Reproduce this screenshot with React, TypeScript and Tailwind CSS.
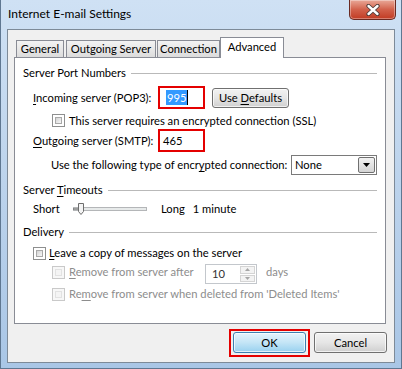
function CloseButton() {
  return (
    <div className="mr-[5px] w-[47px] h-[20px] rounded-b-[5px] border border-t-0 border-[#6a2a22] bg-gradient-to-b from-[#e8a898] via-[#d2614b] to-[#c13a22] flex items-center justify-center shadow-[inset_0_0_0_1px_rgba(255,255,255,0.35)]">
      <svg width="14" height="12" viewBox="0 0 14 12">
        <path d="M2.5 2 L11.5 10 M11.5 2 L2.5 10" stroke="#4a3a38" strokeWidth="4.2" strokeLinecap="round" />
        <path d="M2.5 2 L11.5 10 M11.5 2 L2.5 10" stroke="#ffffff" strokeWidth="2.4" strokeLinecap="round" />
      </svg>
    </div>
  );
}

function Check({ disabled }: { disabled?: boolean }) {
  return (
    <span
      className={
        disabled
          ? "w-[13px] h-[13px] shrink-0 border border-[#c9c9c9] bg-[#f7f7f7] p-[2px]"
          : "w-[13px] h-[13px] shrink-0 border border-[#8e8f8f] bg-white p-[2px]"
      }
    >
      <span
        className={
          disabled
            ? "block w-full h-full border border-[#e2e2e2] bg-[#f4f4f4]"
            : "block w-full h-full border border-[#a9a9a9] bg-gradient-to-br from-[#d3d3d3] to-[#f8f8f8]"
        }
      />
    </span>
  );
}

function GroupHeader({ children }: { children: React.ReactNode }) {
  return (
    <div className="h-[14px] flex items-center pl-[8px] pr-[8px]">
      <span>{children}</span>
      <span className="flex-1 h-px bg-[#b9b9b9] ml-[5px]" />
    </div>
  );
}

function WinButton({ children, primary }: { children: React.ReactNode; primary?: boolean }) {
  return (
    <div
      className={
        primary
          ? "w-[73px] h-[21px] rounded-[3px] border border-[#3c7fb1] bg-gradient-to-b from-[#e5f4fc] via-[#c4e5f6] to-[#98d1ef] shadow-[inset_0_0_0_1px_rgba(255,255,255,0.7)] flex items-center justify-center"
          : "w-[73px] h-[21px] rounded-[3px] border border-[#707070] bg-gradient-to-b from-[#f2f2f2] via-[#e6e6e6] to-[#cfcfcf] shadow-[inset_0_0_0_1px_rgba(255,255,255,0.7)] flex items-center justify-center"
      }
    >
      {children}
    </div>
  );
}

export default function App() {
  return (
    <div className="w-[402px] h-[369px] overflow-hidden whitespace-nowrap bg-gradient-to-b from-[#cfe1f4] via-[#bcd3ec] to-[#a9c6e6] border-x border-b border-[#5f7791] font-['Lato',sans-serif] text-[11.2px] leading-none text-black">
      <div className="h-[29px] flex items-start justify-between">
        <span className="pl-[7px] pt-[8px] text-[12px]">Internet E-mail Settings</span>
        <CloseButton />
      </div>

      <div className="mx-[6px] h-[334px] border border-[#7d8a98] bg-[#f0f0f0] flex flex-col">
        <div className="mt-[7px] ml-[8px] h-[20px] flex items-end">
          <div className="w-[48px] h-[17px] border border-b-0 border-[#898c95] bg-gradient-to-b from-[#f3f3f3] to-[#dcdcdc] flex items-center justify-center">
            General
          </div>
          <div className="ml-[2px] w-[90px] h-[17px] border border-b-0 border-[#898c95] bg-gradient-to-b from-[#f3f3f3] to-[#dcdcdc] flex items-center justify-center">
            Outgoing Server
          </div>
          <div className="ml-[1px] w-[63px] h-[17px] border border-b-0 border-[#898c95] bg-gradient-to-b from-[#f3f3f3] to-[#dcdcdc] flex items-center justify-center">
            Connection
          </div>
          <div className="relative z-10 -mb-px w-[64px] h-[21px] border border-b-0 border-[#898c95] bg-white flex items-center justify-center pb-[2px]">
            Advanced
          </div>
        </div>

        <div className="ml-[6px] w-[372px] h-[267px] border border-[#898c95] bg-white flex flex-col">
          <div className="mt-[8px]">
            <GroupHeader>Server Port Numbers</GroupHeader>
          </div>

          <div className="mt-[6px] h-[23px] flex items-center pl-[18px]">
            <span className="w-[125px]">
              <u className="underline-offset-2">I</u>ncoming server (POP3):
            </span>
            <div className="w-[47px] h-[23px] border-2 border-[#e40000] bg-white flex items-center pl-[6px]">
              <span className="bg-[#3399ff] text-white h-[15px] flex items-center px-px">995</span>
              <span className="w-px h-[15px] bg-black" />
            </div>
            <div className="ml-[7px] w-[77px] h-[20px] rounded-[3px] border border-[#707070] bg-gradient-to-b from-[#f2f2f2] via-[#e6e6e6] to-[#cfcfcf] shadow-[inset_0_0_0_1px_rgba(255,255,255,0.7)] flex items-center justify-center">
              <span>
                Use <u className="underline-offset-2">D</u>efaults
              </span>
            </div>
          </div>

          <div className="mt-[5px] h-[13px] flex items-center pl-[37px]">
            <Check />
            <span className="ml-[4px]">This server requires an encrypted connection (SSL)</span>
          </div>

          <div className="mt-[2px] h-[23px] flex items-center pl-[18px]">
            <span className="w-[125px]">
              <u className="underline-offset-2">O</u>utgoing server (SMTP):
            </span>
            <div className="w-[47px] h-[23px] border-2 border-[#e40000] bg-white flex items-center pl-[3px]">
              465
            </div>
          </div>

          <div className="mt-[3px] h-[20px] flex items-center pl-[36px]">
            <span className="w-[240px]">
              Use the following type of encr<u className="underline-offset-2">y</u>pted connection:
            </span>
            <div className="w-[86px] h-[20px] border border-[#7a7a7a] bg-white flex items-center justify-between pl-[3px] pr-[1px]">
              <span>None</span>
              <div className="w-[17px] h-[16px] border border-[#707070] rounded-[2px] bg-gradient-to-b from-[#f2f2f2] to-[#d4d4d4] flex items-center justify-center">
                <svg width="7" height="4" viewBox="0 0 7 4">
                  <path d="M0 0 H7 L3.5 4 Z" fill="#000" />
                </svg>
              </div>
            </div>
          </div>

          <div className="mt-[8px]">
            <GroupHeader>
              Server <u className="underline-offset-2">T</u>imeouts
            </GroupHeader>
          </div>

          <div className="mt-[5px] h-[14px] flex items-center pl-[18px]">
            <span className="w-[40px]">Short</span>
            <svg width="74" height="14" viewBox="0 0 74 14">
              <rect x="0.5" y="5.5" width="73" height="3" fill="#e7eaea" stroke="#b4b6b8" />
              <path d="M0 7 H5" stroke="#555" strokeWidth="1" />
              <path d="M5.5 1.5 H10.5 V9.5 L8 12.5 L5.5 9.5 Z" fill="#f4f4f4" stroke="#6e6e6e" />
            </svg>
            <span className="ml-[14px]">Long</span>
            <span className="ml-[8px]">1 minute</span>
          </div>

          <div className="mt-[9px]">
            <GroupHeader>Delivery</GroupHeader>
          </div>

          <div className="mt-[7px] h-[14px] flex items-center pl-[18px]">
            <Check />
            <span className="ml-[3px]">
              <u className="underline-offset-2">L</u>eave a copy of messages on the server
            </span>
          </div>

          <div className="mt-[4px] h-[20px] flex items-center pl-[37px] text-[#8d8d8d]">
            <div className="w-[153px] flex items-center -mt-[4px]">
              <Check disabled />
              <span className="ml-[4px]">
                <u className="underline-offset-2">R</u>emove from server after
              </span>
            </div>
            <div className="w-[52px] h-[20px] border border-[#c3c7cc] bg-white flex items-center justify-between pl-[6px] pr-px text-[#333]">
              <span>10</span>
              <div className="w-[15px] h-[16px] flex flex-col gap-px">
                <div className="flex-1 border border-[#d4d4d4] bg-[#f3f3f3] flex items-center justify-center">
                  <svg width="5" height="3" viewBox="0 0 5 3"><path d="M0 3 H5 L2.5 0 Z" fill="#a6a6a6" /></svg>
                </div>
                <div className="flex-1 border border-[#d4d4d4] bg-[#f3f3f3] flex items-center justify-center">
                  <svg width="5" height="3" viewBox="0 0 5 3"><path d="M0 0 H5 L2.5 3 Z" fill="#a6a6a6" /></svg>
                </div>
              </div>
            </div>
            <span className="ml-[9px] -mt-[4px]">days</span>
          </div>

          <div className="mt-[3px] h-[14px] flex items-center pl-[37px] text-[#8d8d8d]">
            <Check disabled />
            <span className="ml-[4px]">
              Re<u className="underline-offset-2">m</u>ove from server when deleted from 'Deleted Items'
            </span>
          </div>
        </div>

        <div className="mt-[8px] mr-[7px] flex justify-end gap-[8px]">
          <div className="relative">
            <span className="absolute -left-[4px] -right-[4px] -top-[3px] -bottom-[4px] border-2 border-[#e40000]" />
            <WinButton primary>OK</WinButton>
          </div>
          <WinButton>Cancel</WinButton>
        </div>
      </div>
    </div>
  );
}
